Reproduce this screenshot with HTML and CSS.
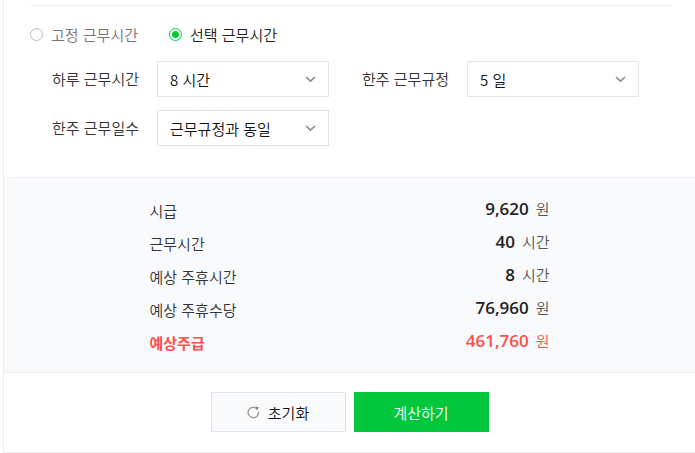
FILE: index.html
```html
<!DOCTYPE html>
<html lang="ko">
<head>
    <meta charset="UTF-8">
    <meta name="viewport" content="width=device-width, initial-scale=1.0">
    <title>주휴수당 계산기</title>
    <link rel="stylesheet" href="styles.css">
</head>
<body>
    <form class="calculator">
        <!-- 근무시간 입력 -->
        <div class="inputs">
            <div class="work-type">
                <label class="radio"><input type="radio" name="workType" value="fixed"><span>고정 근무시간</span></label>
                <label class="radio"><input type="radio" name="workType" value="select" checked><span>선택 근무시간</span></label>
            </div>
            <div class="fields">
                <div class="field">
                    <label for="dayHours">하루 근무시간</label>
                    <div class="select-box">
                        <select id="dayHours"><option>8 시간</option></select>
                        <svg class="arrow" viewBox="0 0 11 7"><path d="M1 1l4.5 4.2L10 1"/></svg>
                    </div>
                </div>
                <div class="field">
                    <label for="weekRule">한주 근무규정</label>
                    <div class="select-box">
                        <select id="weekRule"><option>5 일</option></select>
                        <svg class="arrow" viewBox="0 0 11 7"><path d="M1 1l4.5 4.2L10 1"/></svg>
                    </div>
                </div>
                <div class="field">
                    <label for="weekDays">한주 근무일수</label>
                    <div class="select-box">
                        <select id="weekDays"><option>근무규정과 동일</option></select>
                        <svg class="arrow" viewBox="0 0 11 7"><path d="M1 1l4.5 4.2L10 1"/></svg>
                    </div>
                </div>
            </div>
        </div>

        <!-- 계산 결과 -->
        <div class="result">
            <dl class="result-list">
                <div class="row"><dt>시급</dt><dd><strong>9,620</strong><span>원</span></dd></div>
                <div class="row"><dt>근무시간</dt><dd><strong>40</strong><span>시간</span></dd></div>
                <div class="row"><dt>예상 주휴시간</dt><dd><strong>8</strong><span>시간</span></dd></div>
                <div class="row"><dt>예상 주휴수당</dt><dd><strong>76,960</strong><span>원</span></dd></div>
                <div class="row total"><dt>예상주급</dt><dd><strong>461,760</strong><span>원</span></dd></div>
            </dl>
        </div>

        <div class="buttons">
            <button type="reset" class="btn reset">
                <svg class="reset-icon" viewBox="0 0 13 13"><path class="ring" d="M9 2.1A5.2 5.2 0 1 0 11.4 5.6"/><path class="tip" d="M8.6 0.2L12.2 1.8L9.2 4.2z"/></svg>
                초기화
            </button>
            <button type="button" class="btn submit">계산하기</button>
        </div>
    </form>
</body>
</html>
```
FILE: styles.css
```css
* {
    box-sizing: border-box;
}

body {
    margin: 0;
    background-color: #fff;
    color: #333;
    font-family: "Noto Sans CJK KR", sans-serif;
    font-size: 15px;
    font-weight: 350;
    line-height: 20px;
}

.calculator {
    margin-left: 3px;
    border-left: 1px solid #ececee;
    border-bottom: 1px solid #ececee;
    padding-top: 5px;
}

.inputs {
    margin: 0 23px 0 26px;
    padding: 19px 0 31px;
    border-top: 1px solid #f0f0f1;
}

.work-type {
    display: flex;
    gap: 31px;
}

.radio {
    display: flex;
    align-items: center;
    gap: 8px;
    color: #777;
}

.radio:has(input:checked) {
    color: #222;
}

.radio input {
    appearance: none;
    width: 13px;
    height: 13px;
    margin: 0 0 2px;
    border: 1px solid #bbb;
    border-radius: 50%;
    background-color: #fff;
}

.radio input:checked {
    border-color: #03c73c;
    background: radial-gradient(circle, #03c73c 3px, #fff 4px);
}

.fields {
    display: grid;
    grid-template-columns: 1fr 1fr;
    row-gap: 13px;
    margin-top: 16px;
    padding-left: 22px;
}

.field {
    display: flex;
    align-items: center;
    padding-right: 33px;
}

.field label {
    width: 105px;
    color: #333;
}

.select-box {
    position: relative;
    flex: 1;
}

.select-box select {
    display: block;
    appearance: none;
    width: 100%;
    height: 36px;
    padding: 2px 30px 0 12px;
    border: 1px solid #e1e4ed;
    border-radius: 0;
    background-color: #fff;
    color: #111;
    font: inherit;
}

.arrow {
    position: absolute;
    top: 15px;
    right: 13px;
    width: 11px;
    height: 7px;
    fill: none;
    stroke: #8a8a8a;
    stroke-width: 1.6;
    pointer-events: none;
}

/* 결과 */
.result {
    padding: 16px 0 13px;
    border-top: 1px solid #eef0f3;
    border-bottom: 1px solid #eef0f3;
    background-color: #f9fafc;
}

.result-list {
    max-width: 400px;
    margin: 0 auto;
}

.row {
    display: flex;
    justify-content: space-between;
    height: 33px;
    line-height: 33px;
}

.row dd {
    display: flex;
    gap: 7px;
    margin: 0;
    line-height: 29px;
}

.row strong {
    color: #222;
    font-family: "Open Sans", sans-serif;
    font-size: 17px;
    font-weight: 600;
}

.row span {
    color: #555;
}

.total,
.total strong,
.total span {
    color: #ff4d4d;
}

.total dt {
    font-weight: bold;
}

/* 버튼 */
.buttons {
    display: flex;
    justify-content: center;
    gap: 8px;
    padding: 19px 0 20px;
}

.btn {
    display: flex;
    align-items: center;
    justify-content: center;
    gap: 8px;
    width: 135px;
    height: 40px;
    padding: 2px 0 0;
    border: 0;
    font: inherit;
    cursor: pointer;
}

.reset {
    border: 1px solid #e1e4ed;
    background-color: #f9fafc;
    color: #111;
}

.reset-icon {
    width: 13px;
    height: 13px;
    margin-bottom: 2px;
}

.ring {
    fill: none;
    stroke: #999;
    stroke-width: 1.3;
}

.tip {
    fill: #888;
}

.submit {
    background-color: #03c73c;
    color: #fff;
}
```
